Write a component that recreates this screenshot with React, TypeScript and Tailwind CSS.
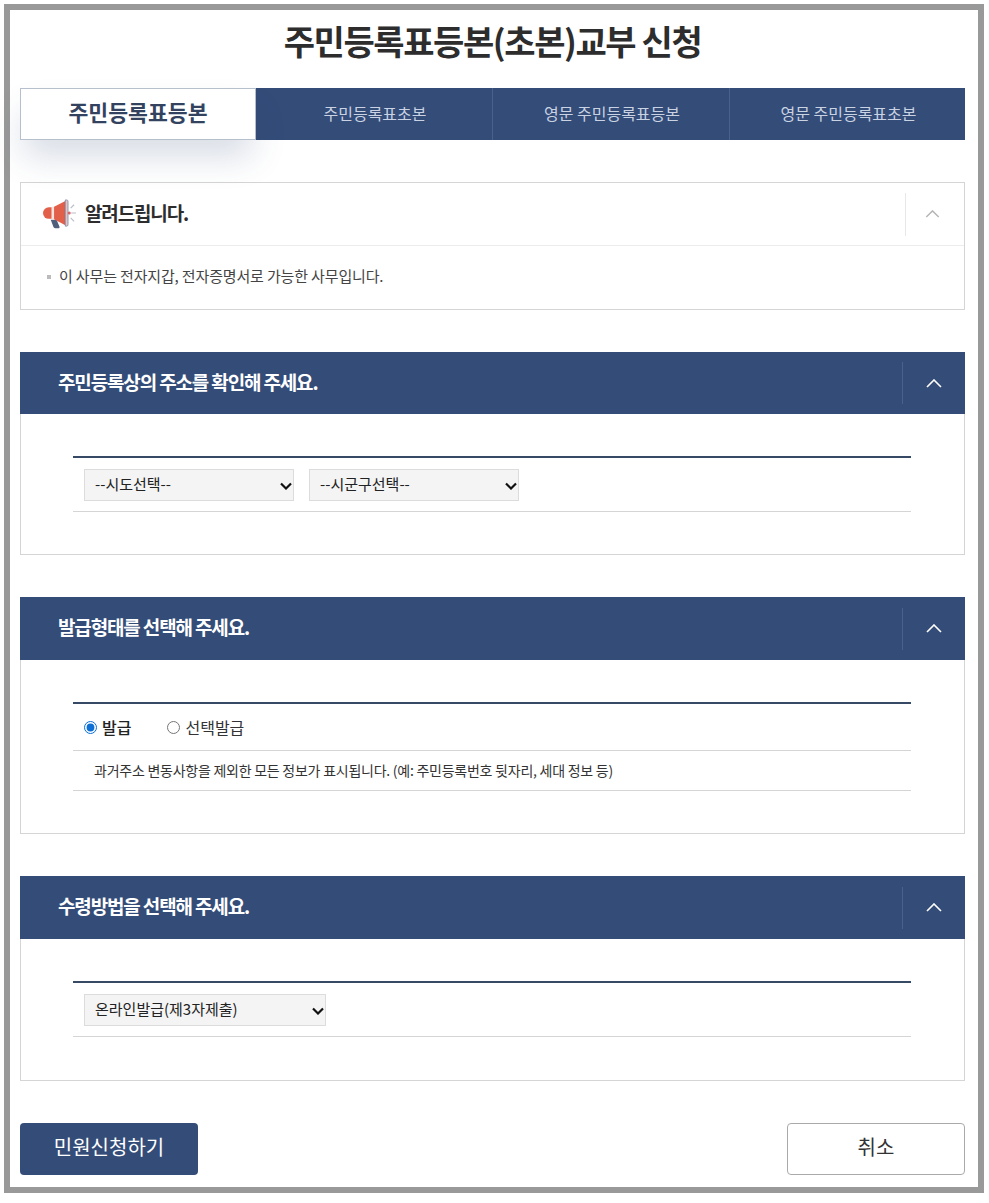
import { ReactNode } from "react";

const Chevron = ({ className }: { className: string }) => (
  <svg viewBox="0 0 16 9" className={className} fill="none" stroke="currentColor" strokeWidth="1.6">
    <path d="M1 8 8 1l7 7" />
  </svg>
);

const Megaphone = () => (
  <svg viewBox="0 0 36 30" className="h-[30px] w-[35px] shrink-0">
    <path d="M9 21h6l3 7c.3 1-.5 1.6-1.4 1.6h-3c-1 0-1.6-.5-1.9-1.4z" fill="#4f5f7c" />
    <path d="M7 8h3v12H7a6 6 0 0 1 0-12z" fill="#e2604a" />
    <rect x="10" y="7.5" width="2.4" height="13" fill="#f3e4df" />
    <path d="M12.4 7.5 24 1.5v25l-11.6-6z" fill="#e2604a" />
    <path d="M24 .5h1.6c.8 0 1.2 1 1.2 2v23c0 1-.4 2-1.2 2H24z" fill="#d9c6cf" stroke="#5d6a85" strokeWidth=".6" />
    <circle cx="28" cy="14" r="1.6" fill="#d9656a" />
    <path d="M30 14h5M29.5 9l3.5-3.5M29.5 19l3.5 3.5" stroke="#b9bec8" strokeWidth="1.2" />
  </svg>
);

const Section = ({ title, children, headClass, bodyClass }: { title: string; children: ReactNode; headClass: string; bodyClass: string }) => (
  <section className="border-x border-b border-[#d5d5d5]">
    <div className={`-mx-px flex items-center justify-between bg-[#344c78] pl-[38px] ${headClass}`}>
      <h2 className="pb-[2px] text-[19px] font-bold tracking-[-1.15px] text-white">{title}</h2>
      <div className="flex h-[42px] w-[63px] items-center justify-center border-l border-[#4a618a] text-white">
        <Chevron className="h-[9px] w-[16px]" />
      </div>
    </div>
    <div className={`pr-[53px] pl-[52px] pt-[42px] ${bodyClass}`}>{children}</div>
  </section>
);

const Select = ({ label, width }: { label: string; width: string }) => (
  <div className={`relative ${width}`}>
    <select className="h-[32px] w-full appearance-none rounded-none border border-[#dcdcdc] bg-[#f4f4f4] pl-[10px] text-[15px] text-[#222]">
      <option>{label}</option>
    </select>
    <svg
      viewBox="0 0 12 8"
      className="pointer-events-none absolute top-[13px] right-[2px] h-[8px] w-[12px]"
      fill="none"
      stroke="#111"
      strokeWidth="2.2"
    >
      <path d="M1 1.5 6 6.5l5-5" />
    </svg>
  </div>
);

export default function App() {
  return (
    <div
      className="m-[4px] h-[1189px] w-[980px] border-[6px] border-[#999] bg-white pl-[10px] pr-[13px] text-[#333]"
      style={{ fontFamily: '"Noto Sans CJK KR", "Noto Sans", sans-serif' }}
    >
      <h1 className="flex h-[78px] items-center justify-center pb-[18px] text-[34px] font-bold tracking-[-1.4px] text-[#2d2d2d]">
        주민등록표등본(초본)교부 신청
      </h1>

      <nav className="grid h-[52px] grid-cols-[236px_236px_237px_236px] bg-[#344c78] text-[16px] text-[#c9d3e3]">
        <div className="flex items-center justify-center border border-[#b6c0cd] bg-white pb-[4px] text-[21.6px] font-bold text-[#33435f] shadow-[0_20px_34px_-4px_rgba(51,77,122,0.2)]">
          주민등록표등본
        </div>
        <div className="flex items-center justify-center pb-[3px] pl-[2px]">주민등록표초본</div>
        <div className="flex items-center justify-center border-l border-[#4a618a] pb-[3px] pl-[2px]">영문 주민등록표등본</div>
        <div className="flex items-center justify-center border-l border-[#4a618a] pb-[3px] pl-[2px]">영문 주민등록표초본</div>
      </nav>

      <section className="mt-[42px] border border-[#d5d5d5]">
        <div className="flex h-[63px] items-center justify-between border-b border-[#ececec] pl-[21px]">
          <div className="flex items-center gap-[8px]">
            <Megaphone />
            <h2 className="pb-[2px] text-[19px] font-bold tracking-[-1.15px] text-[#2d2d2d]">알려드립니다.</h2>
          </div>
          <div className="flex h-[43px] w-[59px] items-center justify-center border-l border-[#e8e8e8] pr-[5px] text-[#b5b5b5]">
            <Chevron className="h-[8px] w-[15px]" />
          </div>
        </div>
        <div className="flex h-[63px] items-center pb-[2px] pl-[26px] text-[15px] tracking-[-0.15px] text-[#444]">
          <span className="mr-[8px] h-[4px] w-[4px] bg-[#bbb]" />
          이 사무는 전자지갑, 전자증명서로 가능한 사무입니다.
        </div>
      </section>

      <div className="mt-[42px] flex flex-col gap-[42px]">
        <Section title="주민등록상의 주소를 확인해 주세요." headClass="h-[62px]" bodyClass="pb-[42px]">
          <div className="flex h-[56px] items-center gap-[15px] border-t-2 border-b border-t-[#364a66] border-b-[#d5d5d5] pl-[11px]">
            <Select label="--시도선택--" width="w-[210px]" />
            <Select label="--시군구선택--" width="w-[210px]" />
          </div>
        </Section>

        <Section title="발급형태를 선택해 주세요." headClass="h-[63px]" bodyClass="pb-[42px]">
          <div className="border-t-2 border-t-[#364a66] text-[#222]">
            <div className="flex h-[47px] items-center border-b border-[#d5d5d5] pl-[11px] text-[16px]">
              <label className="flex items-center gap-[5px]">
                <input type="radio" name="kind" defaultChecked className="m-0 h-[13px] w-[13px] accent-[#0b6fd6]" />
                <span className="font-medium">발급</span>
              </label>
              <label className="ml-[36px] flex items-center gap-[5px] text-[#333]">
                <input type="radio" name="kind" className="m-0 h-[13px] w-[13px]" />
                선택발급
              </label>
            </div>
            <div className="flex h-[40px] items-center border-b border-[#d5d5d5] pl-[21px] text-[14px] tracking-[-0.25px] text-[#333]">
              과거주소 변동사항을 제외한 모든 정보가 표시됩니다. (예: 주민등록번호 뒷자리, 세대 정보 등)
            </div>
          </div>
        </Section>

        <Section title="수령방법을 선택해 주세요." headClass="h-[63px]" bodyClass="pb-[43px]">
          <div className="flex h-[56px] items-center border-t-2 border-b border-t-[#364a66] border-b-[#d5d5d5] pl-[11px]">
            <Select label="온라인발급(제3자제출)" width="w-[242px]" />
          </div>
        </Section>
      </div>

      <div className="mt-[42px] flex items-center justify-between">
        <button className="h-[52px] w-[178px] rounded-[4px] bg-[#344c78] pb-[5px] text-[20px] text-white">민원신청하기</button>
        <button className="h-[52px] w-[178px] rounded-[4px] border border-[#aaa] bg-white pb-[5px] text-[20px] text-[#333]">
          취소
        </button>
      </div>
    </div>
  );
}
